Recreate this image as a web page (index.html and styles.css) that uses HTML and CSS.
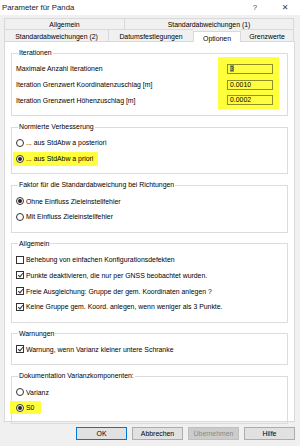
FILE: index.html
```html
<!DOCTYPE html>
<html lang="de">
<head>
<meta charset="UTF-8">
<title>Parameter für Panda</title>
<link rel="stylesheet" href="styles.css">
</head>
<body>

<div class="titlebar">
  <span class="title">Parameter für Panda</span>
  <span class="help">?</span>
  <span class="close">&#x2715;</span>
</div>

<div class="dialog">
  <div class="tabs">
    <div class="tab-row">
      <div class="tab" style="width:120px">Allgemein</div>
      <div class="tab" style="width:170px">Standardabweichungen (1)</div>
    </div>
    <div class="tab-row">
      <div class="tab" style="width:104px">Standardabweichungen (2)</div>
      <div class="tab" style="width:85px">Datumsfestlegungen</div>
      <div class="tab active" style="width:48px">Optionen</div>
      <div class="tab" style="width:53px">Grenzwerte</div>
    </div>
  </div>

  <div class="panel">
    <fieldset class="group">
      <legend>Iterationen</legend>
      <div class="iter-wrap">
        <div class="row">
          <span class="label">Maximale Anzahl Iterationen</span>
          <span class="field"><span class="sel">3</span></span>
        </div>
        <div class="row">
          <span class="label">Iteration Grenzwert Koordinatenzuschlag [m]</span>
          <span class="field">0.0010</span>
        </div>
        <div class="row">
          <span class="label">Iteration Grenzwert Höhenzuschlag [m]</span>
          <span class="field">0.0002</span>
        </div>
      </div>
    </fieldset>

    <fieldset class="group">
      <legend>Normierte Verbesserung</legend>
      <div class="row"><span class="radio"></span>... aus StdAbw a posteriori</div>
      <div class="row"><span class="mark"><span class="radio on"></span>... aus StdAbw a priori</span></div>
    </fieldset>

    <fieldset class="group">
      <legend>Faktor für die Standardabweichung bei Richtungen</legend>
      <div class="row"><span class="radio on"></span>Ohne Einfluss Zieleinstellfehler</div>
      <div class="row"><span class="radio"></span>Mit Einfluss Zieleinstellfehler</div>
    </fieldset>

    <fieldset class="group">
      <legend>Allgemein</legend>
      <div class="row"><span class="check"></span>Behebung von einfachen Konfigurationsdefekten</div>
      <div class="row"><span class="check on"></span>Punkte deaktivieren, die nur per GNSS beobachtet wurden.</div>
      <div class="row"><span class="check on"></span>Freie Ausgleichung: Gruppe der gem. Koordinaten anlegen ?</div>
      <div class="row"><span class="check on"></span>Keine Gruppe gem. Koord. anlegen, wenn weniger als 3 Punkte.</div>
    </fieldset>

    <fieldset class="group">
      <legend>Warnungen</legend>
      <div class="row"><span class="check on"></span>Warnung, wenn Varianz kleiner untere Schranke</div>
    </fieldset>

    <fieldset class="group last">
      <legend>Dokumentation Varianzkomponenten:</legend>
      <div class="row"><span class="radio"></span>Varianz</div>
      <div class="row"><span class="mark small"><span class="radio on"></span>S0</span></div>
    </fieldset>
  </div>

  <div class="buttons">
    <button class="default">OK</button>
    <button>Abbrechen</button>
    <button disabled>Übernehmen</button>
    <button>Hilfe</button>
  </div>
</div>

</body>
</html>
```

FILE: styles.css
```css
body {
  margin: 0;
  width: 300px;
  height: 446px;
  background: #f0f0f0;
  font-family: "Liberation Sans", Arial, sans-serif;
  font-size: 6.9px;
  color: #000;
  overflow: hidden;
}

.titlebar {
  height: 15px;
  background: #fff;
  display: flex;
  align-items: center;
  padding: 0 0 0 2px;
  font-size: 7.8px;
}

.title {
  flex: 1;
  color: #222;
}

.help {
  width: 30px;
  text-align: center;
  color: #444;
}

.close {
  width: 30px;
  text-align: center;
  color: #444;
  font-family: "DejaVu Sans", sans-serif;
  font-size: 8px;
}

.dialog {
  padding: 3px 5px 0 4px;
}

.tab-row {
  display: flex;
  height: 11px;
}

.tab-row + .tab-row {
  height: 12px;
}

.tab {
  box-sizing: border-box;
  border: 1px solid #d9d9d9;
  border-right: none;
  border-bottom: none;
  background: #f0f0f0;
  text-align: center;
  line-height: 11px;
}

.tab:last-child {
  border-right: 1px solid #d9d9d9;
}

.tab-row + .tab-row .tab {
  line-height: 13px;
}

.tab.active {
  background: #fff;
  margin-top: 2px;
  margin-bottom: -1px;
  position: relative;
  line-height: 9px;
  border-right: 1px solid #d9d9d9;
}

.tab.active + .tab {
  border-left: none;
}

.panel {
  box-sizing: border-box;
  height: 381px;
  background: #fff;
  border: 1px solid #d9d9d9;
  padding: 7px 6px 0 6px;
}

.group {
  border: 1px solid #dcdcdc;
  margin: 0 0 7px 0;
  padding: 4px 4px 7px 4px;
}

.group.last {
  margin-bottom: 0;
}

.group legend {
  padding: 0 1px;
  margin-left: 2px;
  line-height: 8px;
}

.row {
  display: flex;
  align-items: center;
  height: 15.7px;
}

.iter-wrap {
  position: relative;
}

.label {
  flex: 1;
}

.field {
  box-sizing: border-box;
  width: 46px;
  height: 10px;
  margin-right: 10px;
  border: 1px solid #8f8f2a;
  background: #ffff40;
  line-height: 8px;
  padding-left: 2px;
  position: relative;
  z-index: 1;
}

/* yellow marker behind the three fields */
.iter-wrap::after {
  content: "";
  position: absolute;
  right: 4px;
  top: -4px;
  width: 61px;
  height: 52px;
  background: #ffff3c;
  z-index: 0;
}

.sel {
  background: #7fbf3c;
  color: #335;
}

.mark {
  display: inline-flex;
  align-items: center;
  background: #ffff3c;
  height: 14px;
  margin-left: -3px;
  padding: 0 5px 0 3px;
}

.mark.small {
  height: 13px;
  margin-left: -6px;
  padding: 0 7px 0 6px;
}

.radio {
  box-sizing: border-box;
  display: inline-block;
  width: 8px;
  height: 8px;
  border: 1px solid #333;
  border-radius: 50%;
  background: #fff;
  margin-right: 2px;
  position: relative;
}

.radio.on::after {
  content: "";
  position: absolute;
  left: 1px;
  top: 1px;
  width: 4px;
  height: 4px;
  border-radius: 50%;
  background: #222;
}

.check {
  box-sizing: border-box;
  display: inline-block;
  width: 8px;
  height: 8px;
  border: 1px solid #333;
  background: #fff;
  margin-right: 2px;
  position: relative;
}

.check.on::after {
  content: "";
  position: absolute;
  left: 1.5px;
  top: 0;
  width: 2px;
  height: 4px;
  border: solid #333;
  border-width: 0 1px 1px 0;
  transform: rotate(40deg);
}

.buttons {
  display: flex;
  justify-content: flex-end;
  gap: 5px;
  padding: 5px 0 0 0;
}

button {
  box-sizing: border-box;
  width: 51px;
  height: 13px;
  padding: 0;
  font-family: inherit;
  font-size: 6.9px;
  background: #e1e1e1;
  border: 1px solid #adadad;
  color: #000;
}

button.default {
  border: 1px solid #0078d7;
}

button:disabled {
  background: #cccccc;
  border-color: #bfbfbf;
  color: #8a8a8a;
}
```
